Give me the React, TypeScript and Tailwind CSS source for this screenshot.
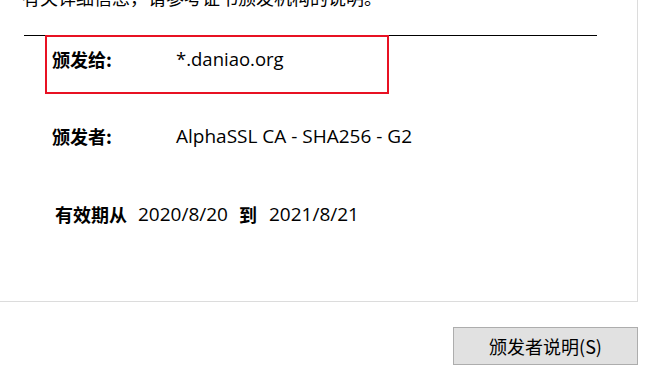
import React from "react";

export default function App() {
  return (
    <div className="relative w-[653px] h-[368px] bg-white overflow-hidden text-black font-['Noto_Sans_CJK_SC','Noto_Sans',sans-serif]">
      <div className="w-[638px] h-[302px] border-r border-b border-[#dcdcdc] bg-white flex flex-col">
        <div className="mt-[-15px] pl-[22px] h-[24px] leading-[24px] text-[18px]">
          有关详细信息，请参考证书颁发机构的说明。
        </div>
        <div className="mt-[26px] ml-[24px] w-[573px] h-px bg-black" />
        <div className="mt-[11px] flex items-center h-[24px] leading-[24px]">
          <span className="ml-[52px] w-[124px] text-[18px] font-bold">颁发给:</span>
          <span className="text-[18.5px] font-['Open_Sans',sans-serif]">*.daniao.org</span>
        </div>
        <div className="mt-[53px] flex items-center h-[24px] leading-[24px]">
          <span className="ml-[52px] w-[124px] text-[18px] font-bold">颁发者:</span>
          <span className="text-[19px] font-['Open_Sans',sans-serif]">AlphaSSL CA - SHA256 - G2</span>
        </div>
        <div className="mt-[54px] flex items-center h-[24px] leading-[24px] text-[18px]">
          <span className="ml-[55px] font-bold">有效期从</span>
          <span className="ml-[11px] text-[19px] font-['Open_Sans',sans-serif]">2020/8/20</span>
          <span className="ml-[11px] font-bold">到</span>
          <span className="ml-[12px] text-[19px] font-['Open_Sans',sans-serif]">2021/8/21</span>
        </div>
      </div>
      <div className="flex justify-end pr-[15px] mt-[25px]">
        <button className="w-[185px] h-[38px] bg-[#e1e1e1] border border-[#adadad] text-[18px] leading-[24px] flex items-center justify-center">
          颁发者说明(S)
        </button>
      </div>
      <div className="absolute left-[45px] top-[35px] w-[344px] h-[59px] border-2 border-[#e81123]" />
    </div>
  );
}
